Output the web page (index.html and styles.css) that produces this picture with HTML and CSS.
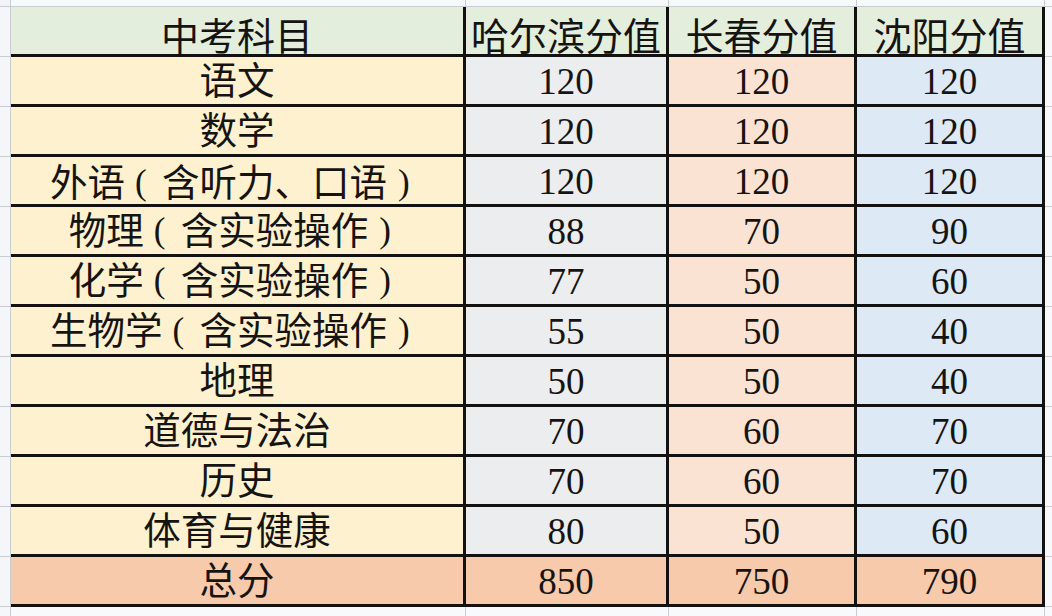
FILE: index.html
```html
<!DOCTYPE html>
<html lang="zh-CN">
<head>
<meta charset="utf-8">
<title>中考科目分值</title>
<link rel="stylesheet" href="styles.css">
</head>
<body>
<div class="sheet">
  <!-- top strip -->
  <div class="g corner"></div>
  <div class="g top"></div>
  <div class="g top"></div>
  <div class="g top"></div>
  <div class="g top"></div>
  <div class="g topright"></div>

  <!-- header -->
  <div class="g side"></div>
  <div class="c head">中考科目</div>
  <div class="c head">哈尔滨分值</div>
  <div class="c head">长春分值</div>
  <div class="c head">沈阳分值</div>
  <div class="g rside"></div>

  <div class="g side"></div>
  <div class="c subj">语文</div>
  <div class="c num hrb">120</div>
  <div class="c num cc">120</div>
  <div class="c num sy">120</div>
  <div class="g rside"></div>

  <div class="g side"></div>
  <div class="c subj">数学</div>
  <div class="c num hrb">120</div>
  <div class="c num cc">120</div>
  <div class="c num sy">120</div>
  <div class="g rside"></div>

  <div class="g side"></div>
  <div class="c subj"><span class="t">外语<span class="lp">(</span>含听力<span class="dun">、</span>口语<span class="rp">)</span></span></div>
  <div class="c num hrb">120</div>
  <div class="c num cc">120</div>
  <div class="c num sy">120</div>
  <div class="g rside"></div>

  <div class="g side"></div>
  <div class="c subj"><span class="t">物理<span class="lp">(</span>含实验操作<span class="rp">)</span></span></div>
  <div class="c num hrb">88</div>
  <div class="c num cc">70</div>
  <div class="c num sy">90</div>
  <div class="g rside"></div>

  <div class="g side"></div>
  <div class="c subj"><span class="t">化学<span class="lp">(</span>含实验操作<span class="rp">)</span></span></div>
  <div class="c num hrb">77</div>
  <div class="c num cc">50</div>
  <div class="c num sy">60</div>
  <div class="g rside"></div>

  <div class="g side"></div>
  <div class="c subj"><span class="t">生物学<span class="lp">(</span>含实验操作<span class="rp">)</span></span></div>
  <div class="c num hrb">55</div>
  <div class="c num cc">50</div>
  <div class="c num sy">40</div>
  <div class="g rside"></div>

  <div class="g side"></div>
  <div class="c subj">地理</div>
  <div class="c num hrb">50</div>
  <div class="c num cc">50</div>
  <div class="c num sy">40</div>
  <div class="g rside"></div>

  <div class="g side"></div>
  <div class="c subj">道德与法治</div>
  <div class="c num hrb">70</div>
  <div class="c num cc">60</div>
  <div class="c num sy">70</div>
  <div class="g rside"></div>

  <div class="g side"></div>
  <div class="c subj">历史</div>
  <div class="c num hrb">70</div>
  <div class="c num cc">60</div>
  <div class="c num sy">70</div>
  <div class="g rside"></div>

  <div class="g side"></div>
  <div class="c subj">体育与健康</div>
  <div class="c num hrb">80</div>
  <div class="c num cc">50</div>
  <div class="c num sy">60</div>
  <div class="g rside"></div>

  <div class="g side"></div>
  <div class="c subj total">总分</div>
  <div class="c num total">850</div>
  <div class="c num total">750</div>
  <div class="c num total">790</div>
  <div class="g rside"></div>

  <!-- bottom strip -->
  <div class="g side last"></div>
  <div class="g bottom"></div>
  <div class="g bottom"></div>
  <div class="g bottom"></div>
  <div class="g bottom"></div>
  <div class="g rside last"></div>
</div>
</body>
</html>
```

FILE: styles.css
```css
* {
  box-sizing: border-box;
}

html, body {
  margin: 0;
  padding: 0;
  background: #f8f9fb;
}

.sheet {
  width: 1052px;
  height: 616px;
  overflow: hidden;
  display: grid;
  grid-template-columns: 11px 455px 203px 188px 188px 1fr;
  grid-template-rows: 7px repeat(12, 50px) 1fr;
  font-family: "Liberation Serif", "Noto Sans CJK SC", serif;
  color: #161412;
}

.g {
  background: #f8f9fb;
  border-right: 1px solid #c9cdd2;
  border-bottom: 1px solid #c9cdd2;
}

.g.corner {
  background: #f2f4f7;
}

.g.side {
  background: #f4f6f9;
}

.g.topright,
.g.rside {
  border-right: none;
}

.g.bottom,
.g.last {
  border-bottom: none;
}

.c {
  display: flex;
  align-items: center;
  justify-content: center;
  border-right: 3px solid #141210;
  border-bottom: 3px solid #141210;
  font-size: 37.5px;
  line-height: 1;
  white-space: nowrap;
  padding-top: 3px;
}

.num {
  font-size: 37px;
  padding-top: 2px;
}

.head {
  background: #e3eedc;
  font-size: 38px;
  padding-top: 12px;
}

.subj {
  background: #fdf1d0;
}

.t {
  display: block;
  line-height: 1;
}

.lp,
.rp {
  display: inline-block;
  width: 37px;
  font-family: "Liberation Serif", serif;
  font-size: 35px;
  line-height: 1;
  text-align: left;
  vertical-align: 2px;
}

.lp {
  padding-left: 10px;
}

.rp {
  padding-left: 11px;
}

.dun {
  font-family: "Noto Sans CJK TC", "Noto Sans CJK SC", sans-serif;
}

.hrb {
  background: #ecedef;
}

.cc {
  background: #fbe3d4;
}

.sy {
  background: #dde9f5;
}

.total {
  background: #f7caab;
}
```
